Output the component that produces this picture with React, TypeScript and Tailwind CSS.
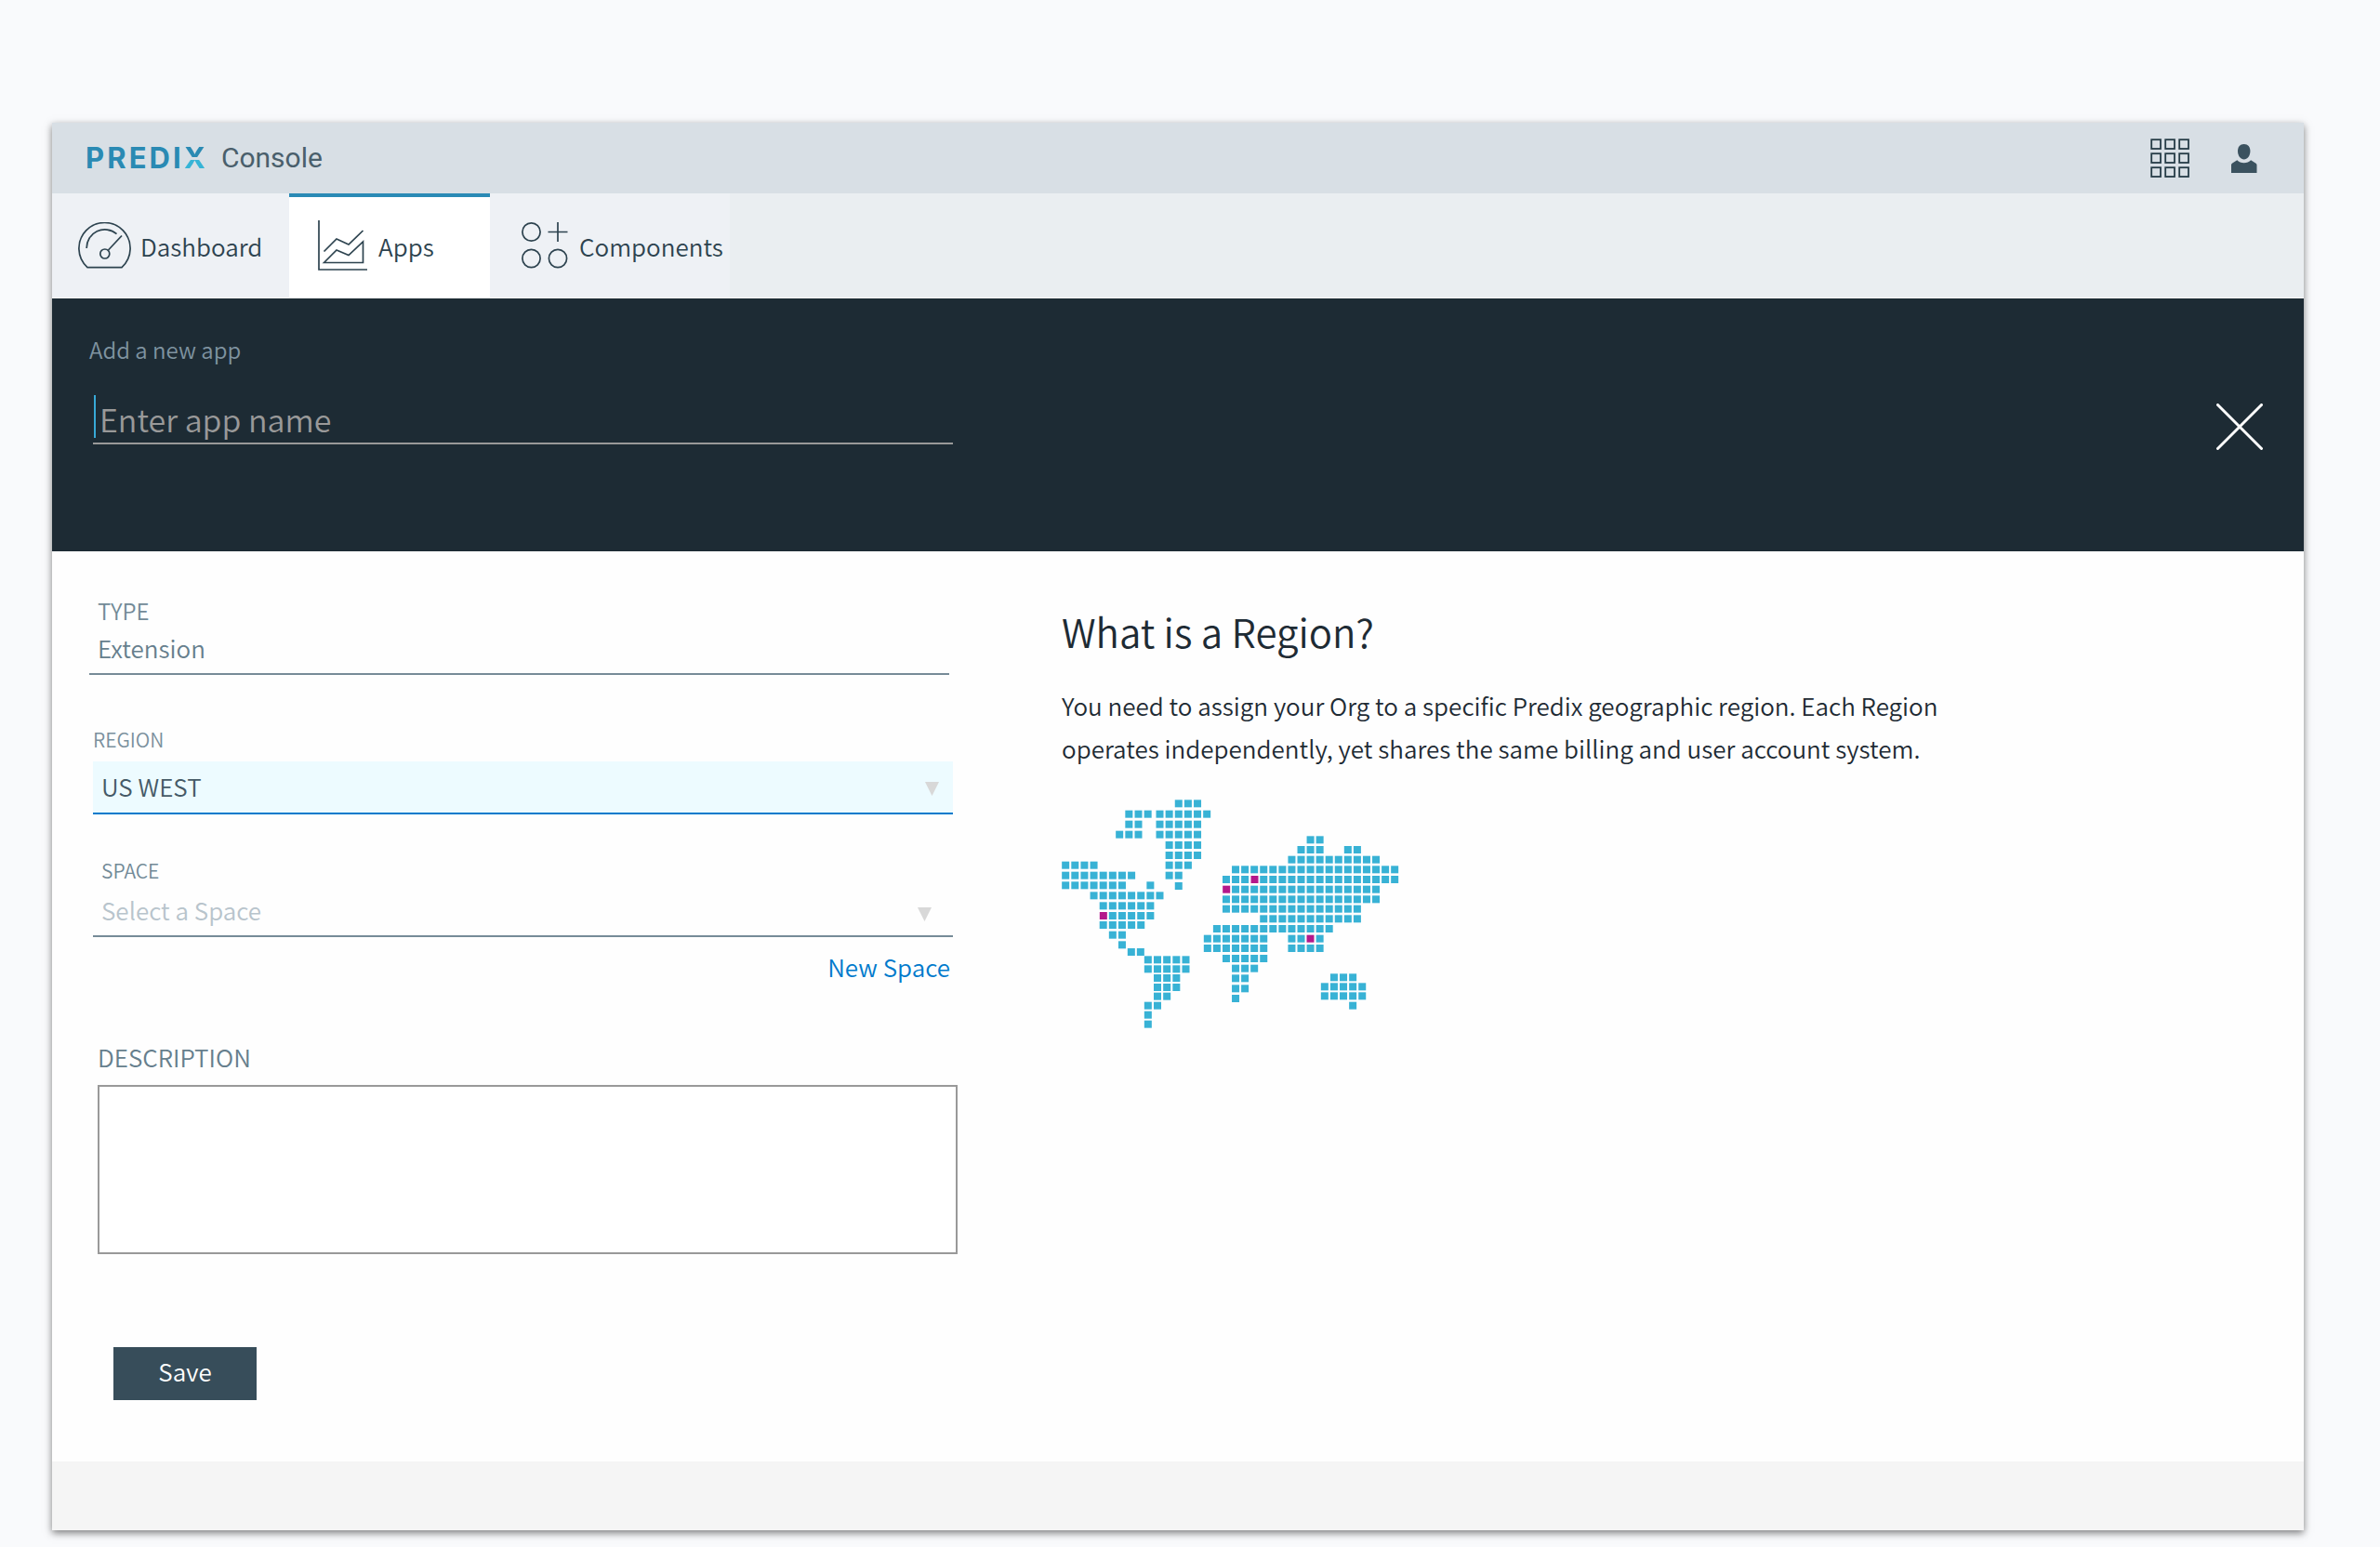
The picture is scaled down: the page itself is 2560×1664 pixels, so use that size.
import React from "react";

type Run = [y: number, start: number, count: number];
type Land = { x: number; pitch: number; runs: Run[] };

const lands: Land[] = [
  {
    x: 48,
    pitch: 30.4,
    runs: [
      [73, 12, 3], [107, 10, 6], [140, 10, 5], [173, 10, 5], [207, 11, 4], [240, 11, 4],
      [272, 11, 3], [305, 11, 2], [339, 12, 1], [272, 0, 4], [305, 0, 8], [337, 0, 7],
      [337, 9, 1], [370, 3, 8], [403, 4, 6], [435, 5, 5], [465, 4, 5], [497, 5, 2], [529, 6, 1],
    ],
  },
  { x: 222, pitch: 30.5, runs: [[107, 1, 3], [140, 1, 2], [173, 0, 3]] },
  { x: 260, pitch: 30, runs: [[552, 0, 2]] },
  {
    x: 314,
    pitch: 30.5,
    runs: [
      [577, 0, 5], [607, 0, 5], [636, 1, 3], [666, 1, 3], [695, 1, 2], [725, 0, 2], [755, 0, 1], [785, 0, 1],
    ],
  },
  {
    x: 506,
    pitch: 30.2,
    runs: [
      [190, 11, 2], [222, 10, 3], [222, 15, 2], [254, 9, 10], [286, 3, 18], [318, 2, 3], [318, 6, 15],
      [350, 3, 16], [382, 2, 17], [413, 2, 15], [445, 6, 11], [477, 1, 13], [509, 0, 7], [509, 9, 2],
      [509, 12, 1], [540, 0, 7], [540, 9, 4], [573, 2, 5], [605, 3, 3], [637, 3, 2], [670, 3, 2], [702, 3, 1],
    ],
  },
  { x: 884, pitch: 30.3, runs: [[634, 1, 3], [664, 0, 5], [694, 0, 5], [725, 3, 1]] },
];

const regionMarks = [[170, 435], [658, 318], [567, 350], [838, 509]];

function WorldMap() {
  return (
    <svg role="img" aria-label="Map of regions" viewBox="36 60 1088 738" className="h-[246px] w-[363px]">
      <g fill="#38b2d5">
        {lands.map((land) =>
          land.runs.flatMap(([y, start, count]) =>
            Array.from({ length: count }, (_, i) => (
              <rect
                key={`${land.x}-${y}-${start + i}`}
                x={land.x + land.pitch * (start + i) - 12}
                y={y - 12}
                width="24"
                height="24"
              />
            )),
          ),
        )}
      </g>
      <g fill="#b4198b">
        {regionMarks.map(([x, y]) => (
          <rect key={x} x={x - 12} y={y - 12} width="24" height="24" />
        ))}
      </g>
    </svg>
  );
}

function GaugeIcon() {
  return (
    <svg viewBox="0 0 57 50" className="h-[50px] w-[57px]" fill="none" stroke="#2d434f" strokeWidth="1.7">
      <path d="M10 48.6A27.6 27.6 0 1 1 47 48.6Z" strokeLinejoin="round" />
      <path d="M9.2 28A19.6 19.6 0 0 1 41.5 12.6" />
      <path d="M32.5 30L47 14.5" />
      <circle cx="28.8" cy="34" r="5" />
    </svg>
  );
}

function ChartIcon() {
  return (
    <svg viewBox="0 0 53 54" className="h-[54px] w-[53px]" fill="none" stroke="#2d434f" strokeWidth="1.7">
      <path d="M1 0V53H53" />
      <path d="M6.5 33.5L20 20L33 26L48.5 11" />
      <path d="M6.5 45.5L20 32L33 37.5L48.5 23V45.5Z" />
    </svg>
  );
}

function ComponentsIcon() {
  return (
    <svg viewBox="0 0 50 50" className="size-[50px]" fill="none" stroke="#2d434f" strokeWidth="1.7">
      <circle cx="10.5" cy="10.5" r="9.6" />
      <circle cx="10.5" cy="39" r="9.6" />
      <circle cx="39" cy="39" r="9.6" />
      <path d="M28.5 10.5H49.5M39 0V21" />
    </svg>
  );
}

function GridIcon() {
  return (
    <svg viewBox="0 0 42 42" className="size-[42px]" fill="none" stroke="#263c47" strokeWidth="1.8">
      {[1.2, 16.2, 31.2].flatMap((y) =>
        [1.2, 16.2, 31.2].map((x) => <rect key={`${x}-${y}`} x={x} y={y} width="9.8" height="9.8" />),
      )}
    </svg>
  );
}

function UserIcon() {
  return (
    <svg viewBox="0 0 28 31" className="h-[31px] w-[28px]" fill="#3b525f">
      <path d="M13.7 0C18 0 20.4 3 20.4 7.6C20.4 12.8 17.2 16.6 13.7 16.6C10.2 16.6 7 12.8 7 7.6C7 3 9.4 0 13.7 0Z" />
      <path d="M6.3 17.2C8 19.2 10.8 20.2 13.7 20.2C16.6 20.2 19.4 19.2 21.1 17.2L26.2 20.4C27.2 21 27.5 21.5 27.5 22.6V31H0V22.6C0 21.5 .3 21 1.2 20.4Z" />
    </svg>
  );
}

function DownArrow({ className }: { className: string }) {
  return (
    <svg viewBox="0 0 15 15" fill="#d8d8d8" className={`pointer-events-none absolute size-[15px] ${className}`}>
      <path d="M0 0H15L7.5 15Z" />
    </svg>
  );
}

const tab = "flex h-full items-center bg-[#eef1f5]";

export default function App() {
  return (
    <div className="min-h-screen bg-[#f9fafc] pt-[132px] pr-[82px] pb-[18px] pl-14 font-['Noto_Sans_CJK_SC',sans-serif] text-[26px] font-[350] text-[#2d434f]">
      <div className="bg-[#fefefe] shadow-[0_3px_8px_rgba(0,0,0,0.5)]">
        <header className="flex h-[76px] items-center justify-between bg-[#d8dfe5] pr-[50px] pl-9">
          <a href="#" className="flex items-center gap-[14px] leading-8">
            <span className="font-['Inter',sans-serif] text-[31px] font-bold tracking-widest text-[#2a8ab3]">
              PREDI
              <span className="bg-[linear-gradient(to_bottom,#2a8ab3_0_50%,transparent_50%_56%,#36b4d6_56%)] bg-clip-text text-transparent">
                X
              </span>
            </span>
            <span className="font-['Roboto',sans-serif] text-[30px] font-normal text-[#4a5f6c]">Console</span>
          </a>
          <div className="flex items-center gap-[45px]">
            <button aria-label="Applications">
              <GridIcon />
            </button>
            <button aria-label="Account">
              <UserIcon />
            </button>
          </div>
        </header>

        <nav className="flex h-[113px] border-b border-white bg-[#eaeef1]">
          <a href="#dashboard" className={`${tab} w-[255px] gap-[10px] pl-7`}>
            <GaugeIcon />
            Dashboard
          </a>
          <a
            href="#apps"
            aria-current="page"
            className="flex h-full w-[216px] items-center gap-3 border-t-4 border-[#2a8ab5] bg-white pb-1 pl-[31px]"
          >
            <ChartIcon />
            Apps
          </a>
          <a href="#components" className={`${tab} w-[258px] gap-3 pl-[34px]`}>
            <ComponentsIcon />
            Components
          </a>
        </nav>

        <section className="flex items-start justify-between bg-[#1d2b34] pt-[39px] pr-11 pb-[109px] pl-10">
          <div className="w-full max-w-[929px]">
            <h1 className="text-[24px] leading-8 text-[#7f93a0]">Add a new app</h1>
            <div className="relative mt-8 ml-1">
              <input
                aria-label="App name"
                placeholder="Enter app name"
                className="block h-[54px] w-full border-b-2 border-[#999999] bg-transparent pl-[7px] text-[34px] text-white caret-[#38a9d6] outline-none placeholder:text-[#999999]"
              />
              <span className="absolute top-px left-px h-[46px] w-[2px] bg-[#38a9d6]" />
            </div>
          </div>
          <button aria-label="Close" className="mt-[74px]">
            <svg viewBox="0 0 50 50" className="size-[50px]" stroke="#ffffff" strokeWidth="3" strokeLinecap="round">
              <path d="M1.5 1.5L48.5 48.5M48.5 1.5L1.5 48.5" />
            </svg>
          </button>
        </section>

        <main className="flex gap-28 pt-12 pr-10 pb-[66px] pl-10">
          <form className="max-w-[934px] flex-1">
            <div className="mr-[9px]">
              <label htmlFor="type" className="block pl-[9px] text-[24px] leading-8 text-[#728a97]">
                TYPE
              </label>
              <input
                id="type"
                defaultValue="Extension"
                className="block h-[53px] w-full border-b-2 border-[#768b98] pb-1 pl-[9px] text-[#667f8d] outline-none"
              />
            </div>

            <div className="mt-[57px] mr-[5px] ml-1">
              <label htmlFor="region" className="block text-[21px] leading-6 text-[#7a909d]">
                REGION
              </label>
              <div className="relative mt-3">
                <select
                  id="region"
                  className="block h-[57px] w-full appearance-none border-b-2 border-[#007acc] bg-[#edfbff] pb-[2px] pl-[9px] text-[#455a67] outline-none"
                >
                  <option>US WEST</option>
                </select>
                <DownArrow className="top-[22px] right-[15px]" />
              </div>
            </div>

            <div className="mt-12 mr-[5px] ml-1">
              <label htmlFor="space" className="block pl-[9px] text-[21px] leading-6 text-[#728a97]">
                SPACE
              </label>
              <div className="relative mt-1">
                <select
                  id="space"
                  className="block h-14 w-full appearance-none border-b-2 border-[#768b98] bg-transparent pb-[2px] pl-[9px] text-[#b8c4cc] outline-none"
                >
                  <option>Select a Space</option>
                </select>
                <DownArrow className="top-6 right-[23px]" />
              </div>
              <div className="mt-4 flex justify-end pr-[3px] leading-8">
                <a href="#new-space" className="text-[#007acc]">
                  New Space
                </a>
              </div>
            </div>

            <div className="mt-[65px] ml-[9px]">
              <label htmlFor="description" className="block leading-8 text-[#667f8d]">
                DESCRIPTION
              </label>
              <textarea
                id="description"
                className="mt-[14px] block h-[182px] w-full resize-none border-2 border-[#999999] bg-white p-2 outline-none"
              />
            </div>

            <button type="button" className="mt-[100px] ml-[26px] h-[57px] w-[154px] bg-[#374d5a] pb-[6px] text-white">
              Save
            </button>
          </form>

          <section className="min-w-0 flex-1 text-[#1e2b34]">
            <h2 className="mt-[14px] text-[42px] leading-[48px]">What is a Region?</h2>
            <p className="mt-[33px] mb-8 max-w-[980px] leading-[46px]">
              You need to assign your Org to a specific Predix geographic region. Each Region operates independently, yet
              shares the same billing and user account system.
            </p>
            <WorldMap />
          </section>
        </main>

        <footer className="h-[74px] bg-[#f5f5f5]" />
      </div>
    </div>
  );
}
